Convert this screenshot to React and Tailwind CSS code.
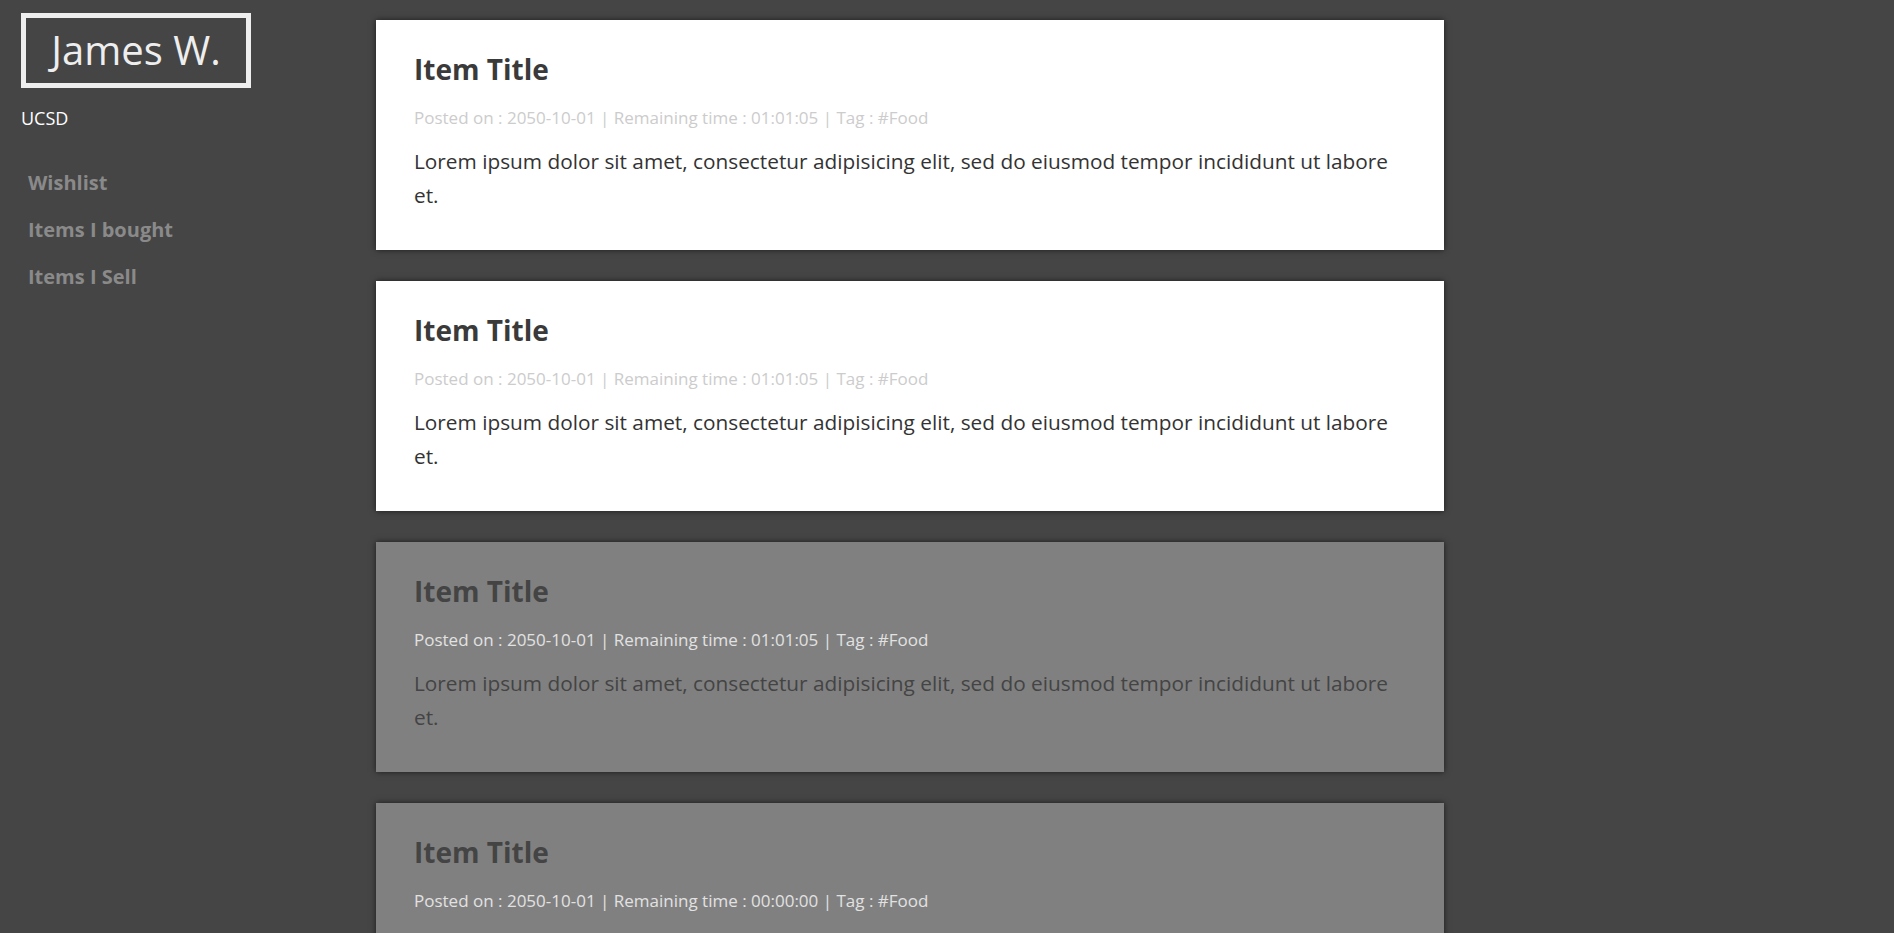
import React from 'react';

const items = [
  { time: '01:01:05', active: true },
  { time: '01:01:05', active: true },
  { time: '01:01:05', active: false },
  { time: '00:00:00', active: false },
];

const ItemCard = ({ item }) => {
  const on = item.active;
  return (
    <div
      className={`w-[1068px] h-[230px] shrink-0 pl-[38px] pr-[45px] pt-[29px] shadow-[0_0_6px_rgba(0,0,0,0.6)] ${
        on ? 'bg-white' : 'bg-[#808080]'
      }`}
    >
      <h2 className={`text-[28px] leading-[40px] font-bold ${on ? 'text-[#3a3a3a]' : 'text-[#444444]'}`}>Item Title</h2>
      <p className={`mt-[18px] text-[17px] leading-[22px] ${on ? 'text-[#cccccc]' : 'text-[#e2e2e2]'}`}>
        Posted on : 2050-10-01 | Remaining time : {item.time} | Tag : #Food
      </p>
      <p className={`mt-[15px] text-[20.8px] leading-[34px] ${on ? 'text-[#333333]' : 'text-[#444444]'}`}>
        Lorem ipsum dolor sit amet, consectetur adipisicing elit, sed do eiusmod tempor incididunt ut labore et.
      </p>
    </div>
  );
};

export default function App() {
  return (
    <div className="w-full min-h-screen h-[933px] overflow-hidden bg-[#454545] flex font-['Open_Sans',sans-serif]">
      {/* sidebar */}
      <aside className="w-[376px] shrink-0 pl-[21px] pt-[13px]">
        <div className="w-[230px] h-[75px] border-[5px] border-[#eeeeee] flex items-center justify-center">
          <span className="text-[40px] leading-none text-[#eeeeee] -mt-[2px]">James W.</span>
        </div>
        <div className="mt-[18px] text-[18px] leading-[24px] text-white">UCSD</div>
        <nav className="mt-[29px] pl-[7px] flex flex-col">
          <a className="text-[20px] leading-[47px] font-bold text-[#8a8a8a]">Wishlist</a>
          <a className="text-[20px] leading-[47px] font-bold text-[#8a8a8a]">Items I bought</a>
          <a className="text-[20px] leading-[47px] font-bold text-[#8a8a8a]">Items I Sell</a>
        </nav>
      </aside>

      {/* item list */}
      <main className="pt-[20px] flex flex-col gap-[31px]">
        {items.map((item, i) => (
          <ItemCard item={item} key={i} />
        ))}
      </main>
    </div>
  );
}
